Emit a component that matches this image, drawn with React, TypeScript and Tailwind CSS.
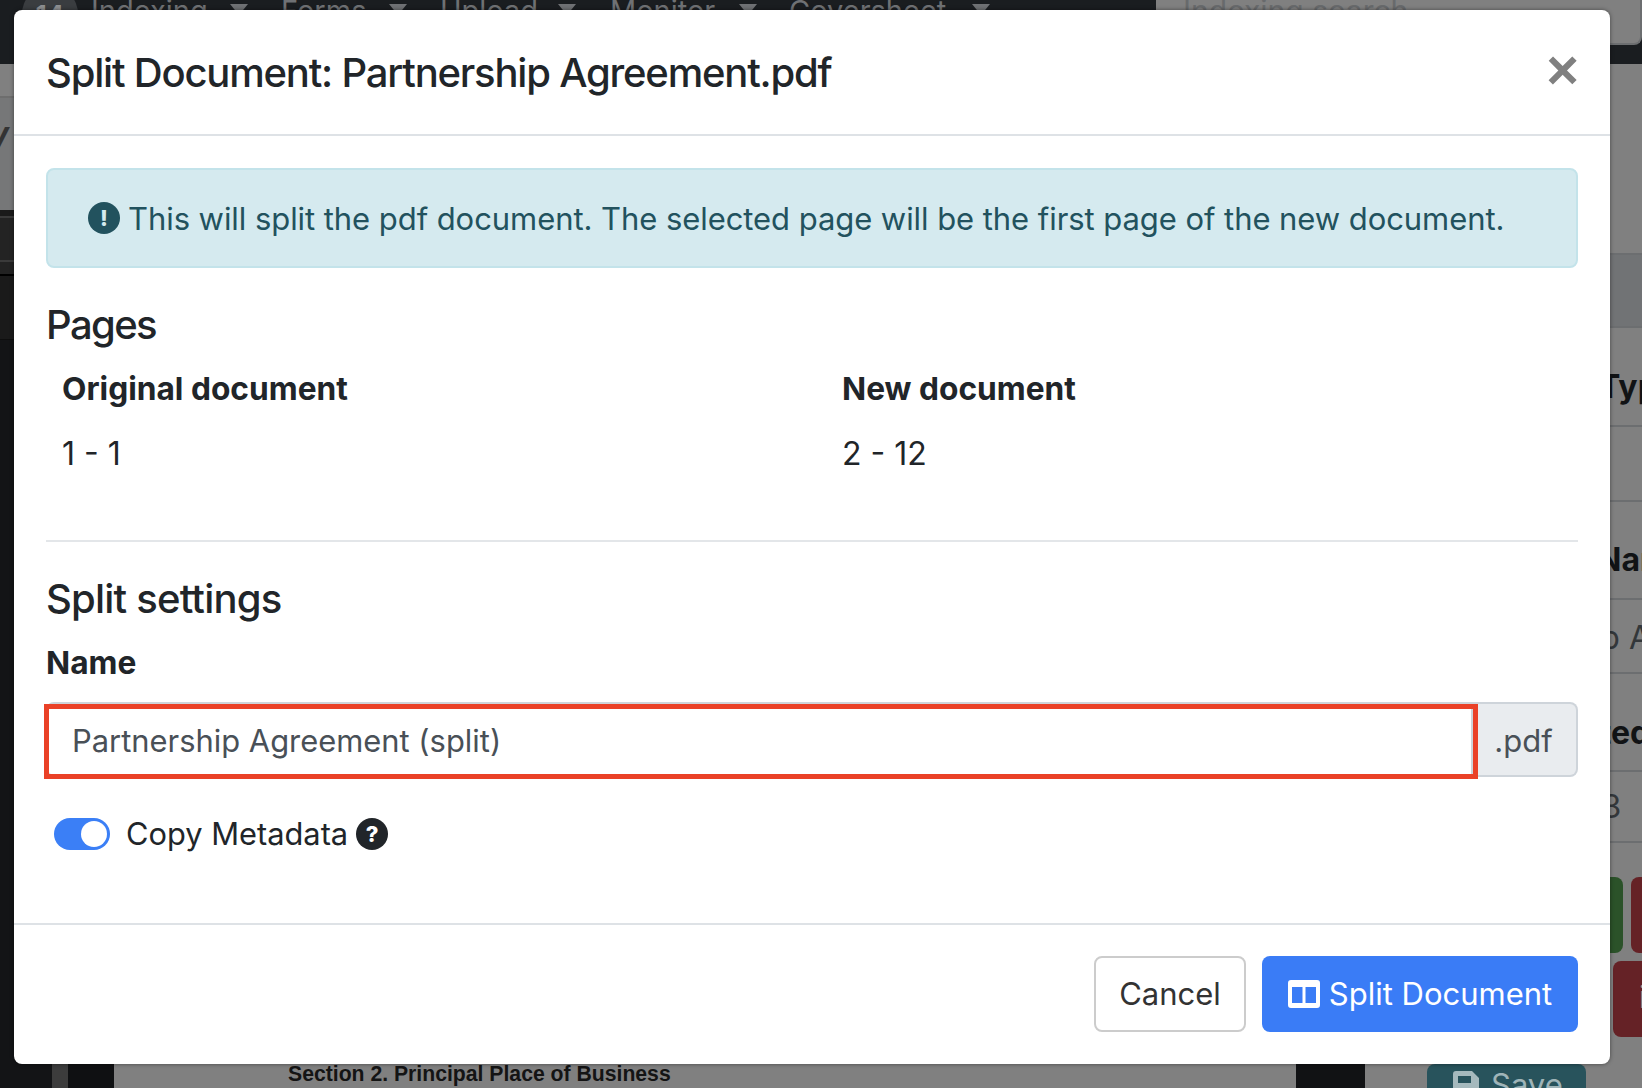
import React from "react";

const Caret = () => (
  <svg width="18" height="11" viewBox="0 0 18 11" className="mt-[17px] shrink-0">
    <path d="M0 0H18L9 11Z" fill="#6f7174" />
  </svg>
);

const NavItem = ({ label, textW, w }: { label: string; textW: string; w: string }) => (
  <div className={`flex gap-[20px] ${w}`}>
    <span className={`whitespace-nowrap ${textW}`}>{label}</span>
    <Caret />
  </div>
);

const Row = ({ text, cls, bold }: { text: string; cls: string; bold?: boolean }) => (
  <div className={`border-b-2 border-[#6c6e70] flex items-center whitespace-nowrap text-[32px] ${cls} ${bold ? "font-bold text-[#111315]" : "text-[#33373a]"}`}>
    {text}
  </div>
);

export default function App() {
  return (
    <div className="relative w-[1642px] h-[1088px] overflow-hidden bg-[#111214] font-['Inter',sans-serif] text-[30px] text-[#212529]">
      {/* page behind the dialog */}
      <header className="h-[64px] bg-[#1a1d20] flex text-[#6f7174] overflow-hidden">
        <div className="w-[22px] shrink-0" />
        <div className="w-[56px] h-[56px] -mt-[14px] shrink-0 rounded-full bg-[#3a3d40] flex items-center justify-center text-[#8d8f91] font-bold text-[26px]">14</div>
        <div className="w-[13px] shrink-0" />
        <nav className="flex -mt-[13px] leading-[48px] w-[1065px] shrink-0 text-[29px]">
          <NavItem label="Indexing" textW="w-[119px]" w="w-[190px]" />
          <NavItem label="Forms" textW="w-[88px]" w="w-[159px]" />
          <NavItem label="Upload" textW="w-[98px]" w="w-[170px]" />
          <NavItem label="Monitor" textW="w-[109px]" w="w-[179px]" />
          <NavItem label="Coversheet" textW="w-[163px]" w="w-[210px]" />
        </nav>
        <div className="w-[486px] shrink-0 h-[58px] bg-[#808080] border-b-2 border-r-2 border-[#6c6e70] rounded-br-lg pl-[27px] -mt-[13px] leading-[48px] text-[#686a6c] whitespace-nowrap">Indexing search</div>
      </header>

      <main className="flex h-[1024px]">
        <aside className="w-[114px] flex flex-col">
          <div className="h-[32px] bg-[#808080] border-b-2 border-[#6e6e6e] box-content" />
          <div className="h-[112px] bg-[#767778] text-[#333] font-bold italic leading-[80px] -indent-[14px] overflow-hidden">V</div>
          <div className="h-[6px] bg-[#1a1a1a]" />
          <div className="h-[46px] bg-[#232323] border-t-2 border-b-2 border-[#3a3a3a]" />
          <div className="h-[12px] bg-[#222]" />
          <div className="h-[66px] bg-[#1a1a1a] border-b border-[#0e0e0e] border-t-2 border-t-black" />
          <div className="flex flex-1">
            <div className="w-[52px] bg-[#131416]" />
            <div className="w-[16px] bg-[#3c3c3c]" />
            <div className="flex-1 bg-[#0f1012]" />
          </div>
        </aside>

        <section className="w-[1182px] bg-[#808080] flex items-end pl-[174px] pb-[1px]">
          <span className="font-['Liberation_Sans',Arial,sans-serif] font-bold text-[21.2px] leading-[26px] text-[#141414] whitespace-nowrap">
            Section 2. Principal Place of Business
          </span>
        </section>

        <div className="w-[69px] bg-[#111214]" />

        <aside className="w-[277px] bg-[#808080] flex flex-col relative overflow-hidden">
          <div className="h-[189px] shrink-0" />
          <div className="h-[75px] shrink-0 bg-[#717375] border-t-2 border-b-2 border-[#6c6e70]" />
          <Row text="Type" cls="h-[99px] pl-[234px] pt-[20px] shrink-0" bold />
          <Row text="" cls="h-[75px] shrink-0" />
          <Row text="Name" cls="h-[98px] pl-[232px] pt-[20px] shrink-0" bold />
          <Row text="Top Agreement" cls="h-[74px] pl-[198px] pt-[3px] shrink-0" />
          <Row text="Selected" cls="h-[98px] pl-[148px] pt-[22px] shrink-0" bold />
          <Row text="123" cls="h-[71px] pl-[204px] shrink-0" />
          <div className="h-[34px] shrink-0" />
          <div className="flex gap-[8px] pl-[190px] h-[76px] shrink-0">
            <div className="w-[68px] shrink-0 bg-[#2b5229] rounded-lg" />
            <div className="w-[60px] shrink-0 bg-[#652226] rounded-lg" />
          </div>
          <div className="h-[8px] shrink-0" />
          <div className="h-[76px] shrink-0 ml-[248px] w-[60px] bg-[#652226] rounded-lg text-[#a98] pl-[26px] pt-[14px]">i</div>
          <div className="h-[27px] shrink-0" />
          <div className="ml-[62px] w-[159px] flex-1 bg-[#28535c] rounded-t-lg flex gap-[12px] pl-[26px] pt-[1px] text-[#9fb4b8] leading-[40px] text-[31px]">
            <svg width="26" height="30" viewBox="0 0 26 30" className="mt-[6px] shrink-0">
              <path d="M3 0H19L26 7V27A3 3 0 0 1 23 30H3A3 3 0 0 1 0 27V3A3 3 0 0 1 3 0ZM5 5V12H18V5ZM13 17A4.5 4.5 0 1 0 13.01 17Z" fill="#a5b9bd" fillRule="evenodd" />
            </svg>
            Save
          </div>
        </aside>
      </main>

      {/* dialog */}
      <div className="absolute left-[14px] top-[10px] w-[1596px] h-[1054px] bg-white rounded-[8px] shadow-[0_0_4px_rgba(0,0,0,0.45)] flex flex-col">
        <div className="h-[126px] border-b-2 border-[#dee2e6] flex items-start justify-between px-[32px] pt-[33px] shrink-0">
          <h1 className="text-[40px] leading-[60px] font-medium tracking-[-0.03em] whitespace-nowrap">Split Document: Partnership Agreement.pdf</h1>
          <button className="text-[#808080] font-bold text-[56px] leading-[50px] font-['Liberation_Sans',sans-serif] -mr-[1px] mt-[2px]">×</button>
        </div>

        <div className="px-[32px] pt-[32px] flex-1 flex flex-col">
          <div className="h-[100px] bg-[#d5eaef] border-2 border-[#c3e3ea] rounded-[8px] flex items-center pl-[40px] text-[#22525e] whitespace-nowrap shrink-0">
            <span className="w-[32px] h-[32px] rounded-full bg-[#22525e] text-[#d5eaef] font-extrabold text-[22px] flex items-center justify-center mr-[8px] shrink-0">!</span>
            <span className="text-[31px] tracking-[-0.002em] pt-[2px]">This will split the pdf document. The selected page will be the first page of the new document.</span>
          </div>

          <h2 className="mt-[33px] text-[40px] leading-[48px] font-medium tracking-[-0.04em]">Pages</h2>
          <div className="grid grid-cols-[780px_1fr] mt-[10px]">
            <div className="pl-[16px] font-bold leading-[60px] text-[31.7px]">Original document</div>
            <div className="pl-[16px] font-bold leading-[60px] text-[31.7px]">New document</div>
            <div className="pl-[16px] leading-[60px] mt-[5px] text-[32px]">1 - 1</div>
            <div className="pl-[16px] leading-[60px] mt-[5px] text-[32px]">2 - 12</div>
          </div>

          <hr className="mt-[56px] border-t-2 border-[#e3e6e9]" />

          <h2 className="mt-[33px] text-[40px] leading-[48px] font-medium tracking-[-0.02em]">Split settings</h2>
          <div className="mt-[16px] font-bold leading-[48px] text-[31.7px]">Name</div>

          <div className="relative mt-[15px] flex h-[75px]">
            <div className="flex-1 border-2 border-[#ced4da] rounded-l-[8px] bg-white flex items-center pl-[24px] pt-[4px] text-[#495057] text-[30.9px]">
              Partnership Agreement (split)
            </div>
            <div className="w-[105px] border-2 border-l-0 border-[#ced4da] rounded-r-[8px] bg-[#e9ecef] flex items-center justify-center pr-[2px] pt-[4px] text-[#495057] text-[31px]">.pdf</div>
            <div className="absolute -left-[2px] top-[2px] w-[1434px] h-[75px] border-[5px] border-[#ea4127]" />
          </div>

          <div className="mt-[41px] flex items-center pl-[8px] h-[32px]">
            <span className="w-[56px] h-[32px] rounded-full bg-[#3b7ff6] flex items-center justify-end pr-[3px]">
              <span className="w-[26px] h-[26px] rounded-full bg-white" />
            </span>
            <span className="ml-[16px] text-[30.8px] pt-[1px]">Copy Metadata</span>
            <span className="ml-[8px] w-[32px] h-[32px] rounded-full bg-[#212529] text-white font-extrabold text-[22px] flex items-center justify-center">?</span>
          </div>
        </div>

        <div className="h-[141px] border-t-2 border-[#dee2e6] flex justify-end items-start gap-[16px] px-[32px] pt-[31px] shrink-0">
          <button className="w-[152px] h-[76px] rounded-[8px] border-2 border-[#ccc] bg-white text-[#333] text-[31px]">Cancel</button>
          <button className="w-[316px] h-[76px] rounded-[8px] bg-[#3a7cf6] text-white text-[31px] flex items-center justify-center gap-[9px]">
            <svg width="32" height="28" viewBox="0 0 32 28">
              <path fillRule="evenodd" d="M3 0H29A3 3 0 0 1 32 3V25A3 3 0 0 1 29 28H3A3 3 0 0 1 0 25V3A3 3 0 0 1 3 0ZM4 7V23H14.5V7ZM17.5 7V23H28V7Z" fill="#fff" />
            </svg>
            Split Document
          </button>
        </div>
      </div>
    </div>
  );
}
